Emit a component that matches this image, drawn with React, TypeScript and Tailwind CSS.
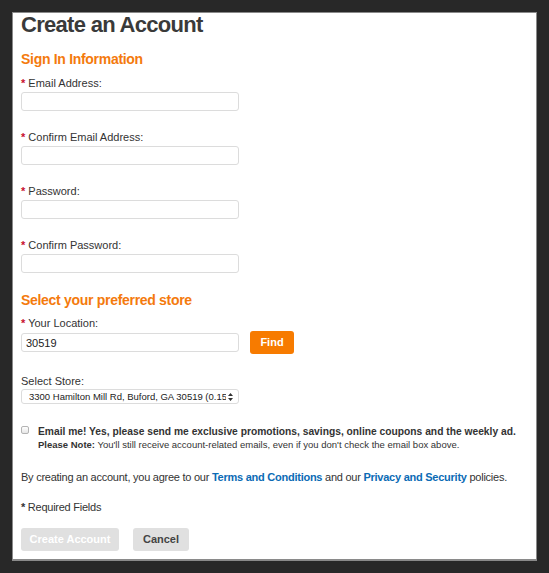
export default function App() {
  const label = "block text-[11px] leading-[13px] text-[#333]";
  const input =
    "block w-[218px] h-[19px] rounded-[3px] border border-[#dcdcdc] bg-white px-[4px] text-[11px] text-[#222] outline-none";
  const Req = () => <span className="text-[#c8102e] font-bold">*</span>;

  return (
    <div
      className="h-[573px] w-[549px] bg-[#282828] pt-[12px] pl-[12px] overflow-hidden"
      style={{ fontFamily: '"Liberation Sans", Arial, sans-serif' }}
    >
      <div className="w-[525px] h-[549px] bg-white border border-[#8a8a8a] border-b-[2px] pl-[8px] pr-[8px] leading-[13px]">
        <h1 className="text-[22px] leading-[24px] font-bold tracking-[-0.7px] text-[#3a3a3a]">Create an Account</h1>

        <h2 className="mt-[14px] text-[14px] leading-[16px] font-bold tracking-[-0.3px] text-[#f47a0d]">
          Sign In Information
        </h2>

        <div className="mt-[10px]">
          <label className={label}>
            <Req /> Email Address:
          </label>
          <input className={input + " mt-[2px]"} />
        </div>
        <div className="mt-[20px]">
          <label className={label}>
            <Req /> Confirm Email Address:
          </label>
          <input className={input + " mt-[2px]"} />
        </div>
        <div className="mt-[20px]">
          <label className={label}>
            <Req /> Password:
          </label>
          <input type="password" className={input + " mt-[2px]"} />
        </div>
        <div className="mt-[20px]">
          <label className={label}>
            <Req /> Confirm Password:
          </label>
          <input type="password" className={input + " mt-[2px]"} />
        </div>

        <h2 className="mt-[19px] text-[14px] leading-[16px] font-bold tracking-[-0.3px] text-[#f47a0d]">
          Select your preferred store
        </h2>

        <div className="mt-[9px]">
          <label className={label}>
            <Req /> Your Location:
          </label>
          <div className="flex items-center gap-[11px] mt-[1px]">
            <input className={input} defaultValue="30519" />
            <button className="w-[44px] h-[23px] rounded-[3px] bg-[#f77b00] text-white text-[11px] font-bold">
              Find
            </button>
          </div>
        </div>

        <div className="mt-[21px]">
          <label className={label}>Select Store:</label>
          <div className="mt-[1px] flex items-center justify-between w-[218px] h-[15px] rounded-[3px] border border-[#dcdcdc] pl-[7px] pr-[5px] text-[9.5px] leading-[13px] text-[#222] overflow-hidden">
            <span className="whitespace-nowrap overflow-hidden w-[197px]">
              3300 Hamilton Mill Rd, Buford, GA 30519 (0.15 mi)
            </span>
            <svg width="5" height="8" viewBox="0 0 5 8" className="shrink-0">
              <path d="M2.5 0 L5 3 H0 Z M2.5 8 L5 5 H0 Z" fill="#333" />
            </svg>
          </div>
        </div>

        <div className="mt-[21px] flex items-start gap-[9px]">
          <span className="mt-[1px] w-[8px] h-[8px] rounded-[2px] border border-[#b4b4b4] bg-gradient-to-b from-white to-[#e6e6e6] shrink-0" />
          <div>
            <div className="text-[10.25px] leading-[14px] font-bold text-[#333] whitespace-nowrap">
              Email me! Yes, please send me exclusive promotions, savings, online coupons and the weekly ad.
            </div>
            <div className="text-[9.5px] leading-[12px] text-[#333] whitespace-nowrap">
              <span className="font-bold">Please Note:</span> You'll still receive account-related emails, even if you
              don't check the email box above.
            </div>
          </div>
        </div>

        <p className="mt-[19px] text-[11px] leading-[14px] tracking-[-0.25px] text-[#333] whitespace-nowrap">
          By creating an account, you agree to our{" "}
          <a className="font-bold text-[#0b6bb5]">Terms and Conditions</a> and our{" "}
          <a className="font-bold text-[#0b6bb5]">Privacy and Security</a> policies.
        </p>

        <p className="mt-[16px] text-[11px] leading-[14px] tracking-[-0.25px] text-[#333]">
          <span className="font-bold">*</span> Required Fields
        </p>

        <div className="mt-[14px] flex gap-[14px]">
          <button className="w-[98px] h-[23px] rounded-[3px] bg-[#e0e0e0] text-white text-[11px] font-bold">
            Create Account
          </button>
          <button className="w-[56px] h-[23px] rounded-[3px] bg-[#e0e0e0] text-[#444] text-[11px] font-bold">
            Cancel
          </button>
        </div>
      </div>
    </div>
  );
}
